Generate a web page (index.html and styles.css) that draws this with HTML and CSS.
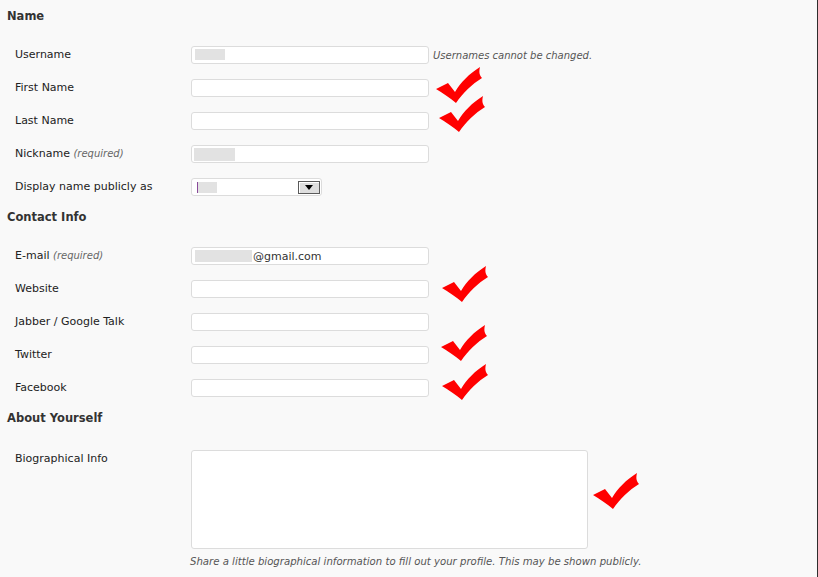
FILE: index.html
```html
<!DOCTYPE html>
<html>
<head>
<meta charset="utf-8">
<title>Profile</title>
<link rel="stylesheet" href="styles.css">
</head>
<body>
<div class="page">
  <h3 class="section-title">Name</h3>
  <div class="rows">
    <div class="row">
      <label class="label">Username</label>
      <div class="field">
        <span class="input"><span class="blur blur-user"></span></span>
        <span class="note">Usernames cannot be changed.</span>
      </div>
    </div>
    <div class="row">
      <label class="label">First Name</label>
      <div class="field"><span class="input"></span></div>
    </div>
    <div class="row">
      <label class="label">Last Name</label>
      <div class="field"><span class="input"></span></div>
    </div>
    <div class="row">
      <label class="label">Nickname <em class="req">(required)</em></label>
      <div class="field"><span class="input"><span class="blur blur-nick"></span></span></div>
    </div>
    <div class="row">
      <label class="label">Display name publicly as</label>
      <div class="field">
        <span class="select">
          <span class="caret"></span><span class="blur blur-display"></span>
          <span class="select-btn"><span class="tri"></span></span>
        </span>
      </div>
    </div>
  </div>

  <h3 class="section-title">Contact Info</h3>
  <div class="rows">
    <div class="row">
      <label class="label">E-mail <em class="req">(required)</em></label>
      <div class="field"><span class="input input-text"><span class="blur blur-email"></span>@gmail.com</span></div>
    </div>
    <div class="row">
      <label class="label">Website</label>
      <div class="field"><span class="input"></span></div>
    </div>
    <div class="row">
      <label class="label">Jabber / Google Talk</label>
      <div class="field"><span class="input"></span></div>
    </div>
    <div class="row">
      <label class="label">Twitter</label>
      <div class="field"><span class="input"></span></div>
    </div>
    <div class="row">
      <label class="label">Facebook</label>
      <div class="field"><span class="input"></span></div>
    </div>
  </div>

  <h3 class="section-title">About Yourself</h3>
  <div class="rows">
    <div class="row row-bio">
      <label class="label">Biographical Info</label>
      <div class="field field-col">
        <span class="textarea"></span>
        <span class="desc">Share a little biographical information to fill out your profile. This may be shown publicly.</span>
      </div>
    </div>
  </div>

  <svg class="check check-1" viewBox="0 0 46 36"><path d="M0 22 L12 16 L19 25 C25 15 33 7 44 0 C43 4 43 8 46 11 C36 17 27 26 20 36 C14 31 7 26 0 22 Z"/></svg>
  <svg class="check check-2" viewBox="0 0 46 36"><path d="M0 22 L12 16 L19 25 C25 15 33 7 44 0 C43 4 43 8 46 11 C36 17 27 26 20 36 C14 31 7 26 0 22 Z"/></svg>
  <svg class="check check-3" viewBox="0 0 46 36"><path d="M0 22 L12 16 L19 25 C25 15 33 7 44 0 C43 4 43 8 46 11 C36 17 27 26 20 36 C14 31 7 26 0 22 Z"/></svg>
  <svg class="check check-4" viewBox="0 0 46 36"><path d="M0 22 L12 16 L19 25 C25 15 33 7 44 0 C43 4 43 8 46 11 C36 17 27 26 20 36 C14 31 7 26 0 22 Z"/></svg>
  <svg class="check check-5" viewBox="0 0 46 36"><path d="M0 22 L12 16 L19 25 C25 15 33 7 44 0 C43 4 43 8 46 11 C36 17 27 26 20 36 C14 31 7 26 0 22 Z"/></svg>
  <svg class="check check-6" viewBox="0 0 46 36"><path d="M0 22 L12 16 L19 25 C25 15 33 7 44 0 C43 4 43 8 46 11 C36 17 27 26 20 36 C14 31 7 26 0 22 Z"/></svg>
</div>
</body>
</html>
```

FILE: styles.css
```css
html, body {
  margin: 0;
  padding: 0;
  background: #f9f9f9;
}

.page {
  position: relative;
  box-sizing: border-box;
  width: 818px;
  min-height: 577px;
  padding-top: 3px;
  background: #f9f9f9;
  border-right: 1px solid #2e2e2e;
  font-family: "DejaVu Sans", Verdana, sans-serif;
  color: #222;
  overflow: hidden;
}

.section-title {
  margin: 3px 0 13px 7px;
  font-size: 11.5px;
  font-weight: bold;
  line-height: 20px;
  color: #333;
}

.rows {
  display: flex;
  flex-direction: column;
}

.row {
  display: flex;
  align-items: flex-start;
  height: 33px;
  box-sizing: border-box;
  padding: 7px 0 0 15px;
}

.row-bio {
  height: auto;
  padding-top: 9px;
}

.label {
  width: 176px;
  flex: none;
  font-size: 11px;
  line-height: 18px;
  color: #222;
}

.req {
  font-size: 10px;
  color: #666;
}

.field {
  display: flex;
  align-items: center;
}

.field-col {
  flex-direction: column;
  align-items: flex-start;
}

.input {
  display: flex;
  align-items: center;
  box-sizing: border-box;
  width: 238px;
  height: 18px;
  padding-left: 3px;
  background: #fff;
  border: 1px solid #dcdcdc;
  border-radius: 3px;
  font-size: 11px;
  color: #333;
}

.blur {
  display: block;
  background: #e2e2e2;
}

.blur-user {
  width: 30px;
  height: 11px;
  margin-top: -2px;
}

.blur-nick {
  width: 41px;
  height: 13px;
  margin-left: -1px;
}

.blur-email {
  width: 57px;
  height: 12px;
  margin-right: 1px;
}

.note {
  margin-left: 4px;
  font-size: 10px;
  font-style: italic;
  color: #555;
}

.select {
  position: relative;
  display: flex;
  align-items: center;
  box-sizing: border-box;
  width: 131px;
  height: 18px;
  padding-left: 5px;
  background: #fff;
  border: 1px solid #dcdcdc;
  border-radius: 3px;
}

.caret {
  display: block;
  width: 1px;
  height: 11px;
  background: #8a4a9a;
}

.blur-display {
  width: 19px;
  height: 11px;
}

.select-btn {
  position: absolute;
  right: 1px;
  top: 2px;
  box-sizing: border-box;
  width: 22px;
  height: 13px;
  display: flex;
  align-items: center;
  justify-content: center;
  background: #dedede;
  border: 1px solid #5a5a5a;
  box-shadow: inset 1px 1px 0 #fff;
}

.tri {
  width: 0;
  height: 0;
  border-left: 4px solid transparent;
  border-right: 4px solid transparent;
  border-top: 5px solid #000;
}

.textarea {
  display: block;
  box-sizing: border-box;
  width: 397px;
  height: 99px;
  background: #fff;
  border: 1px solid #dcdcdc;
  border-radius: 3px;
}

.desc {
  margin-top: 6px;
  margin-left: -1px;
  font-size: 10.15px;
  line-height: 14px;
  font-style: italic;
  color: #555;
}

.check {
  position: absolute;
  width: 46px;
  height: 36px;
  fill: #ff0000;
}

.check-1 { left: 436px; top: 67px; }
.check-2 { left: 439px; top: 96px; }
.check-3 { left: 442px; top: 266px; }
.check-4 { left: 441px; top: 325px; }
.check-5 { left: 442px; top: 364px; }
.check-6 { left: 593px; top: 473px; }
```
